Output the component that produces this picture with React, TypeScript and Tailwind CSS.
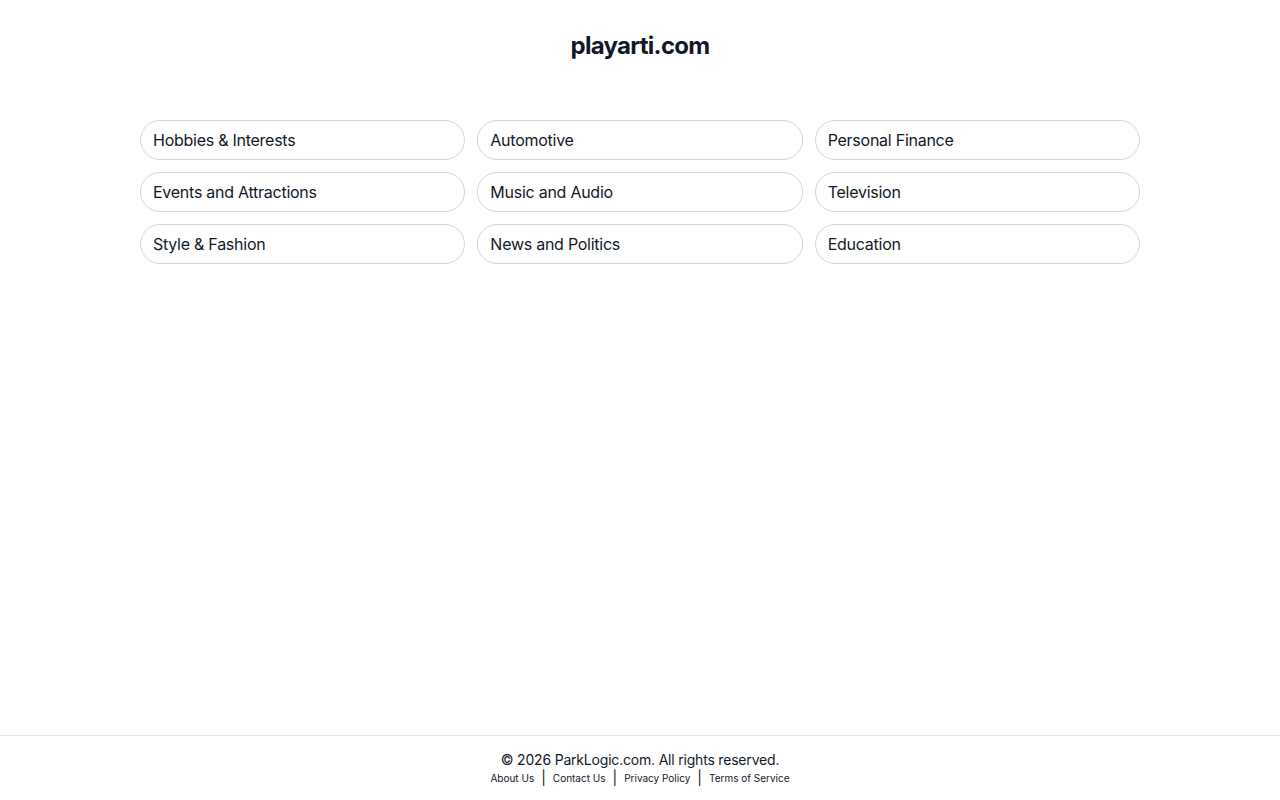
const categories = [
  "Hobbies & Interests",
  "Automotive",
  "Personal Finance",
  "Events and Attractions",
  "Music and Audio",
  "Television",
  "Style & Fashion",
  "News and Politics",
  "Education",
];

const links = ["About Us", "Contact Us", "Privacy Policy", "Terms of Service"];

export default function App() {
  return (
    <div className="flex min-h-screen flex-col bg-white text-[#111827]" style={{ fontFamily: "Inter, 'Liberation Sans', sans-serif" }}>
      <main className="flex-1">
        <h1 className="pt-[30px] text-center text-2xl font-bold leading-8 tracking-[-0.03em] text-[#111827]">playarti.com</h1>
        <div className="mx-auto mt-[58px] grid max-w-[1000px] grid-cols-3 gap-3">
          {categories.map((c) => (
            <a
              key={c}
              href="#"
              className="flex h-10 items-center rounded-full border border-[#d1d5db] px-3 text-base tracking-[-0.016em] text-[#111827]"
            >
              {c}
            </a>
          ))}
        </div>
      </main>
      <footer className="border-t border-[#e5e7eb] pt-[14px] pb-[14px] text-center">
        <p className="text-sm leading-5 tracking-[-0.014em] text-[#111827]">© 2026 ParkLogic.com. All rights reserved.</p>
        <div className="flex items-center justify-center text-[10px] leading-4 text-[#111827]">
          {links.map((l, i) => (
            <span key={l} className="flex items-center">
              {i > 0 && <span className="mx-[7px] text-sm leading-4">|</span>}
              <a href="#">{l}</a>
            </span>
          ))}
        </div>
      </footer>
    </div>
  );
}
